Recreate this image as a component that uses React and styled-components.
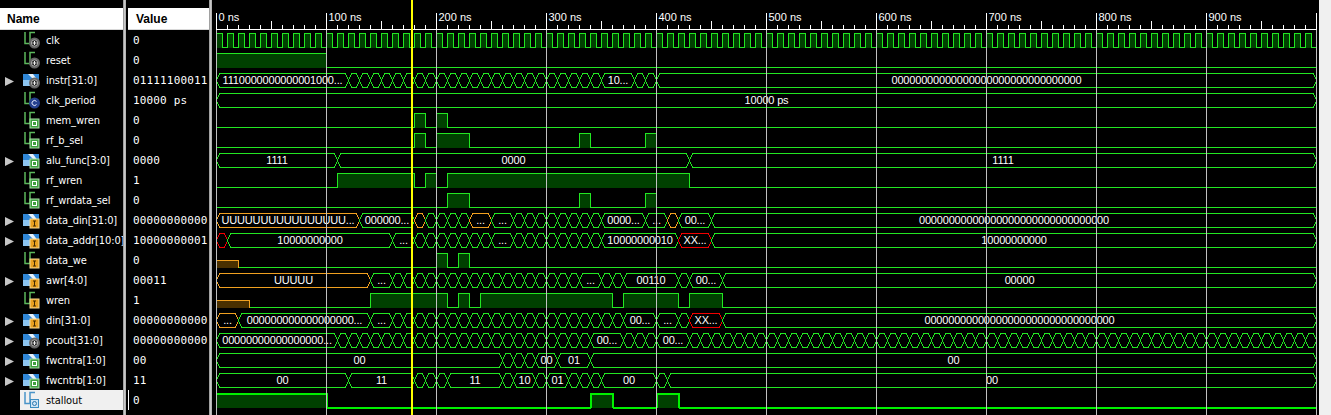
import React from 'react';
import styled, { createGlobalStyle } from 'styled-components';

const GlobalStyle = createGlobalStyle`
html, body {
    margin: 0;
    padding: 0;
    background: #000;
}
`;

const Page = styled.div`
display: flex;
width: 1331px;
height: 415px;
overflow: hidden;
background: #000;
`;

const Panel = styled.div`
display: flex;
flex-direction: column;
flex: none;
width: ${(p) => p.$width}px;
padding-top: 8px;
box-sizing: border-box;
overflow: hidden;
`;

const Divider = styled.div`
flex: none;
width: 3px;
margin-right: ${(p) => p.$after}px;
background: linear-gradient(to right, #8c8c8c, #c8c8c8 50%, #a8a8a8);
`;

const Heading = styled.div`
height: 22px;
flex: none;
box-sizing: border-box;
padding-left: ${(p) => p.$indent}px;
background: #fff;
border-bottom: 1px solid #d8d8d8;
font: bold 12px/22px "Liberation Sans", Arial, sans-serif;
color: #000;
`;

const NameRow = styled.div`
display: flex;
align-items: center;
height: 20px;
flex: none;
`;

const Expander = styled.span`
flex: none;
width: 9px;
height: 9px;
margin: 3px 6px 0 5px;
background: ${(p) => (p.$visible ? '#c6c6c6' : 'transparent')};
clip-path: polygon(0 0, 100% 50%, 0 100%);
`;

const NameCell = styled.div`
display: flex;
align-items: center;
flex: 1;
height: 20px;
min-width: 0;
background: ${(p) => (p.$selected ? '#f0f0f0' : 'transparent')};
color: ${(p) => (p.$selected ? '#000' : '#fff')};
`;

const NameText = styled.span`
margin-left: 6px;
padding-top: 1px;
white-space: nowrap;
letter-spacing: -0.1px;
font: 11px/19px "DejaVu Sans Condensed", "Liberation Sans", Arial, sans-serif;
`;

const ValueRow = styled.div`
height: 20px;
flex: none;
box-sizing: border-box;
padding: 1px 0 0 4px;
border-left: 1px solid ${(p) => (p.$selected ? '#fff' : 'transparent')};
white-space: nowrap;
font: 11px/19px "DejaVu Sans Mono", "Liberation Mono", monospace;
letter-spacing: 0.15px;
color: #fff;
`;

const WavePanel = styled.div`
flex: none;
width: 1105px;
height: 415px;
background: #000;
`;

const Gutter = styled.div`
flex: none;
width: 2px;
background: #000;
`;

const RightEdge = styled.div`
flex: 1;
background: #f0f0f0;
`;

const WaveSvg = styled.svg`
display: block;
`;

const RulerLabel = styled.text`
font: 11px "Liberation Sans", Arial, sans-serif;
fill: #fff;
`;

const BusLabel = styled.text`
font: 11px "Liberation Sans", Arial, sans-serif;
letter-spacing: -0.18px;
fill: #fff;
text-anchor: middle;
`;

const GREEN = '#22e622';
const BRIGHT = '#00f000';
const ORANGE = '#f0a020';
const RED = '#f00000';
const ORIGIN = 4.5;
const END = 1000;

const xAt = (t) => Math.round(ORIGIN - 0.5 + t * 1.1) + 0.5;
const topOf = (i) => 33.5 + 20 * i;
const bottomOf = (i) => 47.5 + 20 * i;

// one unlabelled change every 10 ns, given as segment ends
const steps = (from, to) => {
    const out = [];
    for (let t = from; t <= to; t += 10) out.push([t]);
    return out;
};

const ZEROS = '00000000000000000000000000000000';

const SIGNALS = [
    { name: 'clk', value: '0', badge: 'plus', wave: { kind: 'clock' } },
    { name: 'reset', value: '0', badge: 'plus', wave: { kind: 'bit', highs: [[0, 100]] } },
    {
        name: 'instr[31:0]', value: '01111100011', badge: 'plus', bus: true,
        wave: { kind: 'bus', segs: [[120, '1110000000000001000...'], ...steps(130, 350), [380, '10...'], [390], [400], [1000, ZEROS]] },
    },
    { name: 'clk_period', value: '10000 ps', badge: 'c', wave: { kind: 'bus', segs: [[1000, '10000 ps']] } },
    { name: 'mem_wren', value: '0', badge: 'o', wave: { kind: 'bit', highs: [[180, 190], [200, 210]] } },
    { name: 'rf_b_sel', value: '0', badge: 'o', wave: { kind: 'bit', highs: [[180, 190], [200, 230], [330, 340], [390, 400]] } },
    {
        name: 'alu_func[3:0]', value: '0000', badge: 'o', bus: true,
        wave: { kind: 'bus', segs: [[110, '1111'], [430, '0000'], [1000, '1111']] },
    },
    { name: 'rf_wren', value: '1', badge: 'o', wave: { kind: 'bit', highs: [[110, 180], [190, 200], [210, 430]] } },
    { name: 'rf_wrdata_sel', value: '0', badge: 'o', wave: { kind: 'bit', highs: [[210, 230], [330, 340], [390, 400]] } },
    {
        name: 'data_din[31:0]', value: '00000000000', badge: 'i', bus: true,
        wave: {
            kind: 'bus',
            segs: [
                [130, 'UUUUUUUUUUUUUUUU...', ORANGE], [180, '000000...'], [190, '', ORANGE], ...steps(200, 230),
                [250, '...', ORANGE], [270, '...'], ...steps(280, 350), [390, '0000...'], [410, '...'],
                [420, '', ORANGE], [450, '00...'], [1000, ZEROS],
            ],
        },
    },
    {
        name: 'data_addr[10:0]', value: '10000000001', badge: 'i', bus: true,
        wave: {
            kind: 'bus',
            segs: [
                [10, '', RED], [160, '10000000000'], [180, '...'], ...steps(190, 250), [270, '...'],
                ...steps(280, 350), [420, '10000000010'], [450, 'XX...', RED], [1000, '10000000000'],
            ],
        },
    },
    { name: 'data_we', value: '0', badge: 'i', wave: { kind: 'bit', highs: [[0, 20, ORANGE], [200, 210], [220, 230]] } },
    {
        name: 'awr[4:0]', value: '00011', badge: 'i', bus: true,
        wave: {
            kind: 'bus',
            segs: [
                [140, 'UUUUU', ORANGE], [160, '...'], ...steps(170, 330), [350, '...'], [360], [370],
                [420, '00110'], [430], [460, '00...'], [1000, '00000'],
            ],
        },
    },
    {
        name: 'wren', value: '1', badge: 'i',
        wave: { kind: 'bit', highs: [[0, 30, ORANGE], [140, 210], [220, 230], [240, 360], [370, 420], [430, 460]] },
    },
    {
        name: 'din[31:0]', value: '00000000000', badge: 'i', bus: true,
        wave: {
            kind: 'bus',
            segs: [
                [20, '...', ORANGE], [140, '000000000000000000...'], [160, '...'], ...steps(170, 370),
                [400, '00...'], [420, '...'], [430], [460, 'XX...', RED], [1000, ZEROS],
            ],
        },
    },
    {
        name: 'pcout[31:0]', value: '00000000000', badge: 'plus', bus: true,
        wave: {
            kind: 'bus',
            segs: [[110, '00000000000000000...'], ...steps(120, 340), [370, '00...'], [380], [390], [400], [430, '00...'], ...steps(440, 1000)],
        },
    },
    {
        name: 'fwcntra[1:0]', value: '00', badge: 'o', bus: true,
        wave: { kind: 'bus', segs: [[260, '00'], [270], [280], [290], [310, '00'], [340, '01'], [1000, '00']] },
    },
    {
        name: 'fwcntrb[1:0]', value: '11', badge: 'o', bus: true,
        wave: {
            kind: 'bus',
            segs: [
                [120, '00'], [180, '11'], [190], [200], [210], [260, '11'], [270], [290, '10'], [300], [320, '01'],
                [330], [340], [350], [400, '00'], [410], [1000, '00'],
            ],
        },
    },
    { name: 'stallout', value: '0', badge: 'o', selected: true, wave: { kind: 'bit', highs: [[0, 100], [340, 360], [400, 420]], thick: true } },
];

function Badge({ kind, selected }) {
    if (selected) {
        return (
            <g>
                <rect x="10.5" y="9.5" width="8" height="8" fill="#d0e4f4" stroke="#3c8cc0" />
                <circle cx="14.5" cy="13.5" r="2" fill="none" stroke="#2a78b0" />
            </g>
        );
    }
    if (kind === 'plus') {
        return (
            <g>
                <circle cx="14.5" cy="13" r="5.5" fill="#666" />
                <circle cx="14.5" cy="13" r="3.2" fill="#262626" stroke="#a8a8a8" />
                <path d="M12.5 13h4M14.5 11v4" stroke="#eee" />
            </g>
        );
    }
    if (kind === 'c') {
        return (
            <g>
                <circle cx="14.5" cy="13" r="5.5" fill="#26418f" />
                <path d="M16.5 11.5a2.5 2.5 0 1 0 0 3" fill="none" stroke="#e8ecff" />
            </g>
        );
    }
    if (kind === 'i') {
        return (
            <g>
                <rect x="10" y="9" width="9" height="9" fill="#e8a020" stroke="#f8d890" />
                <path d="M14.5 11v5M13 11h3M13 16h3" stroke="#402800" />
            </g>
        );
    }
    return (
        <g>
            <rect x="10" y="9" width="9" height="9" fill="#3ea03e" stroke="#a8e0a8" />
            <rect x="12.5" y="11.5" width="4" height="4" fill="none" stroke="#fff" />
        </g>
    );
}

function SignalIcon({ bus, badge, selected }) {
    const wire = selected ? '#4a94c8' : '#5cb85c';
    return (
        <svg width="20" height="20" viewBox="0 0 20 20" style={{ flex: 'none' }}>
            {bus ? (
                <g>
                    <rect x="3" y="4" width="16" height="12" fill="#2f86d6" />
                    <rect x="3" y="10" width="16" height="6" fill="#8cc4f0" />
                    <path d="M8 4h5l5 7v3z" fill="#e6f2fc" />
                </g>
            ) : (
                <path d="M5 2V13.5H10V2.5H15" fill="none" stroke={wire} strokeWidth="1.5" />
            )}
            <Badge kind={badge} selected={selected} />
        </svg>
    );
}

function Ruler() {
    const ticks = [];
    for (let t = 0; t <= END; t += 10) {
        const top = t % 100 === 0 ? 13 : t % 50 === 0 ? 21 : 25;
        ticks.push(<line key={t} x1={xAt(t)} x2={xAt(t)} y1={top} y2={30} stroke="#fff" />);
    }
    const labels = [];
    for (let t = 0; t < END; t += 100) {
        labels.push(<RulerLabel key={t} x={xAt(t) + 2} y={21}>{t} ns</RulerLabel>);
    }
    return (
        <g shapeRendering="crispEdges">
            <line x1={xAt(0)} x2={xAt(END)} y1={29.5} y2={29.5} stroke="#fff" />
            {ticks}
            {labels}
        </g>
    );
}

function ClockWave({ row }) {
    const pulses = [];
    for (let t = 0; t < END; t += 10) {
        const a = xAt(t);
        const b = xAt(t + 5);
        const c = xAt(t + 10);
        pulses.push(<rect key={t} x={a} y={topOf(row)} width={b - a} height={14} fill="#004000" />);
        pulses.push(
            <path
                key={`e${t}`}
                d={`M${a} ${bottomOf(row)}V${topOf(row)}H${b}V${bottomOf(row)}H${c}`}
                fill="none"
                stroke={GREEN}
            />
        );
    }
    return <g shapeRendering="crispEdges">{pulses}</g>;
}

function BitWave({ row, highs, thick }) {
    const top = topOf(row);
    const bottom = bottomOf(row);
    const width = thick ? 2 : 1;
    const colour = thick ? BRIGHT : GREEN;
    const parts = [];
    let last = 0;
    highs.forEach(([a, b, tint]) => {
        // undefined ('U') spans sit at half height, in orange
        const level = tint ? top + 7 : top;
        const stroke = tint || colour;
        if (a > last) {
            parts.push(<line key={`l${a}`} x1={xAt(last)} x2={xAt(a)} y1={bottom} y2={bottom} stroke={colour} strokeWidth={width} />);
        }
        parts.push(<rect key={`f${a}`} x={xAt(a)} y={level} width={xAt(b) - xAt(a)} height={bottom - level} fill={tint ? '#4a3000' : '#004000'} />);
        const rise = a === 0 ? `M${xAt(a)} ${level}` : `M${xAt(a)} ${bottom}V${level}`;
        parts.push(<path key={`p${a}`} d={`${rise}H${xAt(b)}V${bottom}`} fill="none" stroke={stroke} strokeWidth={width} />);
        last = b;
    });
    parts.push(<line key="end" x1={xAt(last)} x2={xAt(END)} y1={bottom} y2={bottom} stroke={colour} strokeWidth={width} />);
    return <g shapeRendering="crispEdges">{parts}</g>;
}

function BusWave({ row, segs }) {
    const top = topOf(row);
    const bottom = bottomOf(row);
    const mid = top + 7;
    let start = 0;
    return (
        <g>
            {segs.map(([end, label, tint]) => {
                const a = xAt(start);
                const b = xAt(end);
                start = end;
                const points = `${a},${mid} ${a + 3},${top} ${b - 3},${top} ${b},${mid} ${b - 3},${bottom} ${a + 3},${bottom}`;
                return (
                    <g key={end}>
                        <polygon points={points} fill="none" stroke={tint || GREEN} shapeRendering="crispEdges" />
                        {label ? <BusLabel x={(a + b) / 2} y={mid + 3.5}>{label}</BusLabel> : null}
                    </g>
                );
            })}
        </g>
    );
}

function Waves() {
    const grid = [];
    for (let t = 0; t <= END; t += 100) {
        grid.push(<line key={t} x1={xAt(t)} x2={xAt(t)} y1={30} y2={415} stroke="#c0c0c0" shapeRendering="crispEdges" />);
    }
    return (
        <WaveSvg width="1105" height="415" viewBox="0 0 1105 415">
            <Ruler />
            {SIGNALS.map((s, i) => {
                if (s.wave.kind === 'clock') return <ClockWave key={s.name} row={i} />;
                if (s.wave.kind === 'bit') return <BitWave key={s.name} row={i} highs={s.wave.highs} thick={s.wave.thick} />;
                return <BusWave key={s.name} row={i} segs={s.wave.segs} />;
            })}
            {grid}
            <rect x="199" y="0" width="2" height="415" fill="#ffff00" />
        </WaveSvg>
    );
}

export default function App() {
    return (
        <Page>
            <GlobalStyle />
            <Panel $width={123}>
                <Heading $indent={7}>Name</Heading>
                {SIGNALS.map((s) => (
                    <NameRow key={s.name}>
                        <Expander $visible={s.bus} />
                        <NameCell $selected={s.selected}>
                            <SignalIcon bus={s.bus} badge={s.badge} selected={s.selected} />
                            <NameText>{s.name}</NameText>
                        </NameCell>
                    </NameRow>
                ))}
            </Panel>
            <Divider $after={2} />
            <Panel $width={81}>
                <Heading $indent={8}>Value</Heading>
                {SIGNALS.map((s) => (
                    <ValueRow key={s.name} $selected={s.selected}>{s.value}</ValueRow>
                ))}
            </Panel>
            <Divider $after={0} />
            <WavePanel>
                <Waves />
            </WavePanel>
            <Gutter />
            <RightEdge />
        </Page>
    );
}
